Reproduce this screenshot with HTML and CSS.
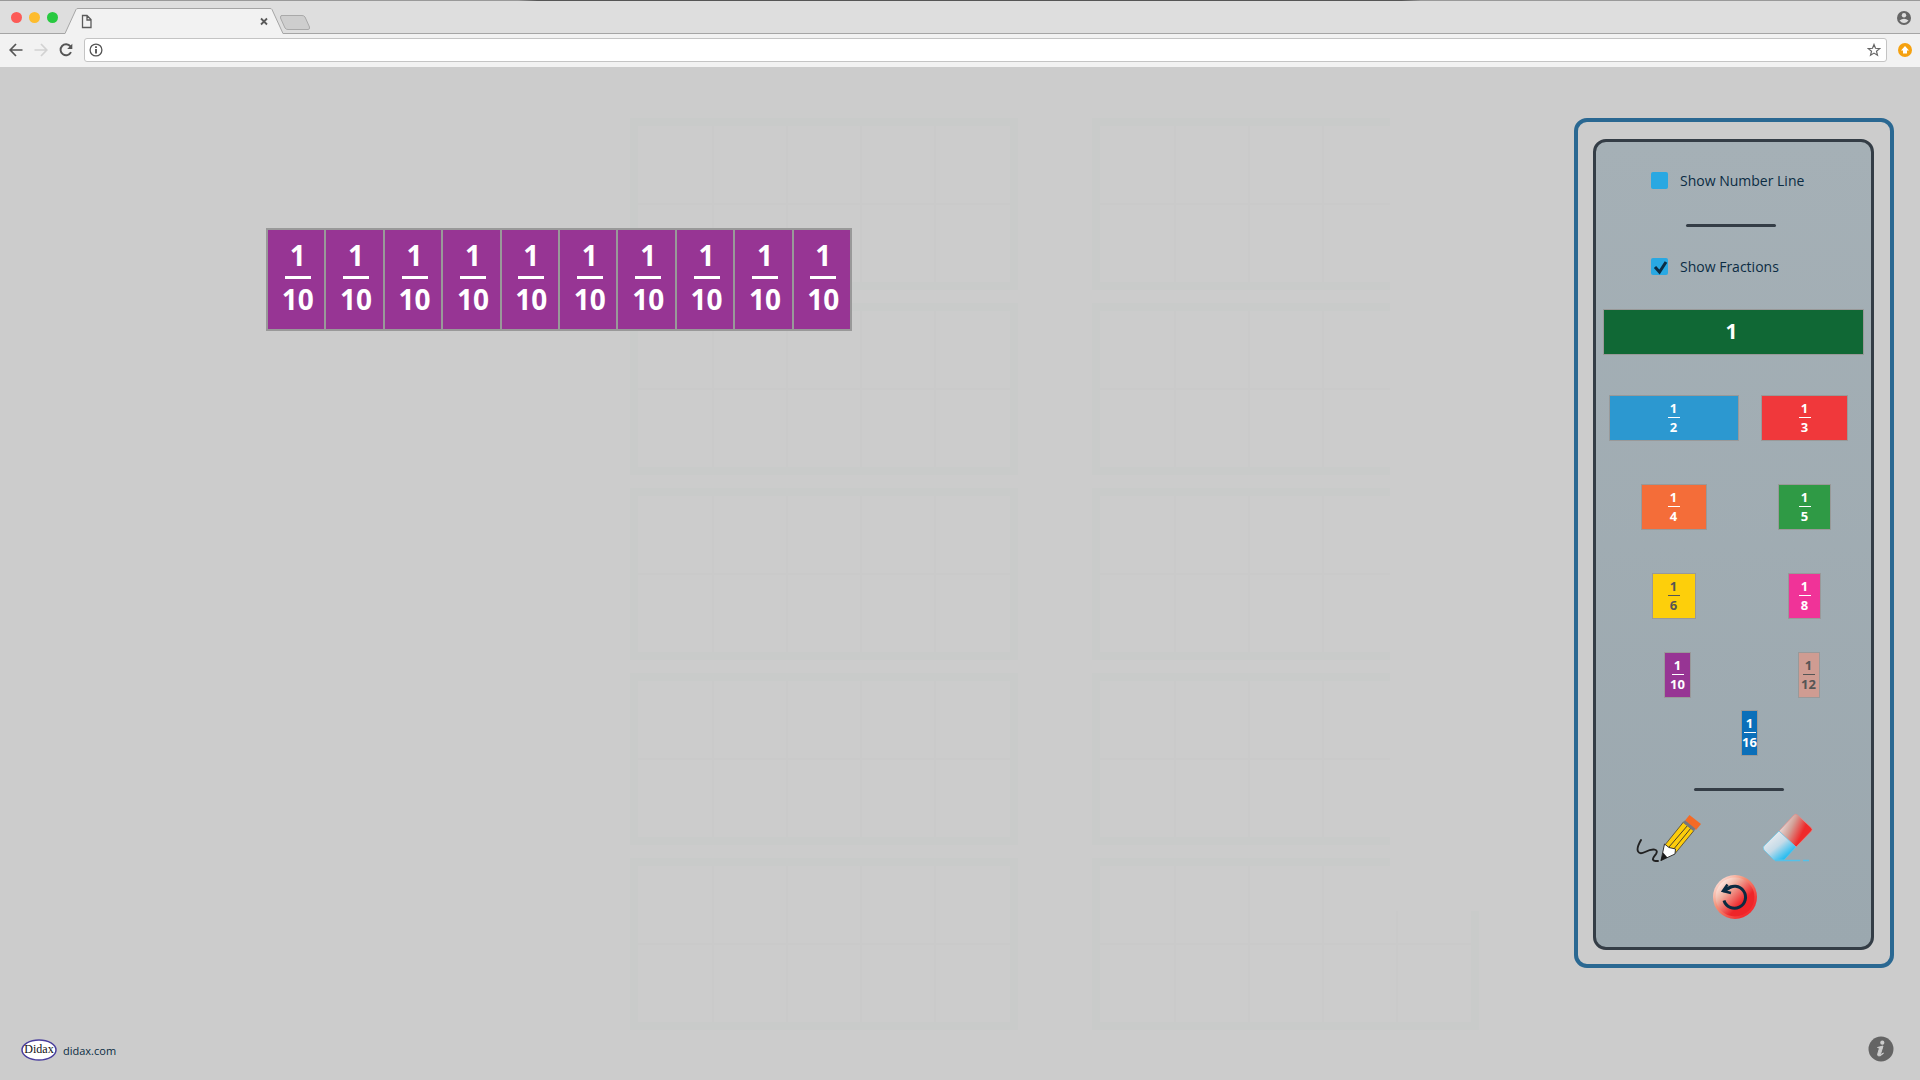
FILE: index.html
```html
<!DOCTYPE html>
<html lang="en">
<head>
<meta charset="utf-8">
<title>Fraction Tiles</title>
<link rel="stylesheet" href="styles.css">
</head>
<body>
<header class="browser">
  <div class="tabs">
    <span class="light red"></span><span class="light yellow"></span><span class="light green"></span>
    <svg class="tab-shape" width="246" height="34" viewBox="0 0 246 34">
      <path d="M0 33.5 L11 9.500Q11.500 8.500 13 8.500H205Q206.500 8.500 207 9.500L218 33.500V34H0Z" fill="#f2f2f2"/>
      <path d="M0 33.500 L11 9.500Q11.500 8.500 13 8.500H205Q206.500 8.500 207 9.500L218 33.500H246" fill="none" stroke="#a5a5a5"/>
      <path d="M216 15.500H237Q239 15.500 240 17L244.500 27Q245 29.500 243 29.500H223Q221 29.500 220 28L215.500 18Q215 15.500 217 15.500Z" fill="#cecece" stroke="#a9a9a9"/>
      <path d="M17.500 15.500H22L26 19.500V27.500H17.500ZM22 15.500V20H26" fill="none" stroke="#5b5b5b" stroke-width="1.300"/>
      <path d="M196 18.500L202 24.500M202 18.500L196 24.500" stroke="#5a5a5a" stroke-width="1.800"/>
    </svg>
    <svg class="user" width="14" height="14" viewBox="0 0 14 14"><circle cx="7" cy="7" r="7" fill="#666"/><circle cx="7" cy="4.300" r="2.200" fill="#dedede"/><path d="M2.500 9.500Q7 6 11.500 9.500Q7 14.500 2.500 9.500Z" fill="#dedede"/></svg>
  </div>
  <div class="toolbar">
    <button class="nav" aria-label="Back"><svg width="14" height="14" viewBox="0 0 14 14"><path d="M13.500 7H1.500M7 1L1.200 7L7 13" fill="none" stroke="#555" stroke-width="1.700"/></svg></button>
    <button class="nav" aria-label="Forward"><svg width="14" height="14" viewBox="0 0 14 14"><path d="M.5 7H12.500M7 1L12.800 7L7 13" fill="none" stroke="#d2d2d2" stroke-width="1.700"/></svg></button>
    <button class="nav" aria-label="Reload"><svg width="14" height="14" viewBox="0 0 14 14"><path d="M12 9.200A5.500 5.500 0 1 1 11.400 3.400" fill="none" stroke="#555" stroke-width="1.900"/><path d="M13.300 .8V6H8.200Z" fill="#555"/></svg></button>
    <div class="address">
      <svg width="14" height="14" viewBox="0 0 14 14"><circle cx="7" cy="7" r="5.900" fill="none" stroke="#555" stroke-width="1.300"/><path d="M7 6V10.500M7 3.300V4.900" stroke="#444" stroke-width="1.700"/></svg>
      <input class="url" type="text" aria-label="Address">
      <svg width="14" height="14" viewBox="0 0 14 14"><path d="M7 1.500L8.500 5.300L12.700 5.600L9.500 8.300L10.500 12.300L7 10.100L3.500 12.300L4.500 8.300L1.300 5.600L5.500 5.300Z" fill="none" stroke="#666" stroke-width="1.200"/></svg>
    </div>
    <svg width="14" height="14" viewBox="0 0 14 14"><circle cx="7" cy="7" r="7" fill="#f5a110"/><path d="M7 3L11 7.500H9V10.500H5V7.500H3Z" fill="#fff"/></svg>
  </div>
</header>
<main class="app">
  <svg class="ghost" width="850" height="912" viewBox="0 0 850 912" aria-hidden="true">
    <defs>
      <g id="frame-left" fill="none" stroke="#c9cbca"><rect x="4" y="4" width="380" height="164" stroke-width="8"/><path stroke="#cacaca" stroke-width="2" d="M83 8V164M157 8V164M231 8V164M305 8V164M8 86H380"/></g>
      <g id="frame-right" fill="none" stroke="#c9cbca"><path d="M760 4H466V168H760" stroke-width="8"/><path stroke="#cacaca" stroke-width="2" d="M545 8V164M619 8V164M693 8V164M470 86H760"/></g>
    </defs>
    <use href="#frame-left"/><use href="#frame-right"/>
    <use href="#frame-left" y="185"/><use href="#frame-right" y="185"/>
    <use href="#frame-left" y="370"/><use href="#frame-right" y="370"/>
    <use href="#frame-left" y="555"/><use href="#frame-right" y="555"/>
    <use href="#frame-left" y="740"/><use href="#frame-right" y="740"/>
    <path d="M760 908H845V793" fill="none" stroke="#c9cbca" stroke-width="8"/>
    <path d="M767 793V904M760 826H841" fill="none" stroke="#cacaca" stroke-width="2"/>
  </svg>
  <section class="canvas" aria-label="Workspace">
    <div class="strip">
      <div class="tile"><span>1</span><i></i><span>10</span></div>
      <div class="tile"><span>1</span><i></i><span>10</span></div>
      <div class="tile"><span>1</span><i></i><span>10</span></div>
      <div class="tile"><span>1</span><i></i><span>10</span></div>
      <div class="tile"><span>1</span><i></i><span>10</span></div>
      <div class="tile"><span>1</span><i></i><span>10</span></div>
      <div class="tile"><span>1</span><i></i><span>10</span></div>
      <div class="tile"><span>1</span><i></i><span>10</span></div>
      <div class="tile"><span>1</span><i></i><span>10</span></div>
      <div class="tile"><span>1</span><i></i><span>10</span></div>
    </div>
  </section>
  <aside class="frame">
    <div class="panel">
      <label class="option"><input type="checkbox"><span>Show Number Line</span></label>
      <hr class="rule rule-top">
      <label class="option"><input type="checkbox" checked><span>Show Fractions</span></label>
      <button class="piece whole">1</button>
      <div class="row">
        <button class="piece half"><span>1</span><i></i><span>2</span></button>
        <button class="piece third"><span>1</span><i></i><span>3</span></button>
      </div>
      <div class="row">
        <button class="piece fourth"><span>1</span><i></i><span>4</span></button>
        <button class="piece fifth"><span>1</span><i></i><span>5</span></button>
      </div>
      <div class="row">
        <button class="piece sixth"><span>1</span><i></i><span>6</span></button>
        <button class="piece eighth"><span>1</span><i></i><span>8</span></button>
      </div>
      <div class="row row-small">
        <button class="piece tenth"><span>1</span><i></i><span>10</span></button>
        <button class="piece twelfth"><span>1</span><i></i><span>12</span></button>
      </div>
      <button class="piece sixteenth"><span>1</span><i></i><span>16</span></button>
      <hr class="rule rule-bottom">
      <div class="tools">
        <button class="tool" aria-label="Draw">
          <svg width="66" height="50" viewBox="0 0 66 50">
            <path d="M5 27C-2 39 3 42 9 39C17 35 23 36 20 41C17 45 14 48 22 48" fill="none" stroke="#222" stroke-width="1.900" stroke-linecap="round"/>
            <path d="M47.500 9L58 17.500L39.500 40L28.500 32.500Z" fill="#fdcd0b" stroke="#4b3f2c" stroke-width=".8"/>
            <path d="M52 12L33 34M55 15L37 37" stroke="#4b3f2c"/>
            <path d="M28.500 31L33 34.500L39.500 36L39 41L25 47.500Z" fill="#fff" stroke="#333"/>
            <path d="M27 39.500L31.500 44.500L24.500 48Z" fill="#1b1b1b"/>
            <path d="M53.500 2L65 11L60 17L49 7.500Z" fill="#f46a25"/>
            <path d="M48 8.500L58.500 17" stroke="#77777b" stroke-width="3"/>
          </svg>
        </button>
        <button class="tool" aria-label="Erase">
          <svg width="52" height="50" viewBox="0 0 52 50">
            <defs>
              <linearGradient id="er" x1="0.1" y1="0.300" x2=".85" y2=".65"><stop offset="0" stop-color="#e8d8d6"/><stop offset=".35" stop-color="#d3a097"/><stop offset=".8" stop-color="#ef2a2a"/></linearGradient>
              <linearGradient id="eb" x1="0.200" y1=".2" x2=".8" y2=".85"><stop offset="0" stop-color="#e8eaee"/><stop offset=".45" stop-color="#c5dbe8"/><stop offset="1" stop-color="#18baf2"/></linearGradient>
            </defs>
            <path d="M17 18L32 2Q33.500 .5 35.500 2L49 14.500Q51 16.500 49.500 18L34 34Z" fill="url(#er)" stroke="#e58b88" stroke-width=".7"/>
            <path d="M17 18L34 34L22 47H12L2 37Q.5 34.500 2 33Z" fill="url(#eb)" stroke="#63c5e8" stroke-width=".7"/>
            <path d="M13 47.500H38M41 47.500H47" stroke="#55c1e8" stroke-width="1.700"/>
          </svg>
        </button>
      </div>
      <button class="tool reset" aria-label="Reset">
        <svg width="44" height="44" viewBox="0 0 44 44">
          <defs><linearGradient id="rs" x1=".1" y1=".1" x2=".85" y2=".85"><stop offset="0" stop-color="#fff0ea"/><stop offset=".3" stop-color="#efb3a2"/><stop offset=".75" stop-color="#ee2529"/></linearGradient>
          <linearGradient id="rr" x1="0" y1="0" x2="1" y2="1"><stop offset="0" stop-color="#fff"/><stop offset=".4" stop-color="#f48f75"/><stop offset=".8" stop-color="#f52d30"/></linearGradient></defs>
          <circle cx="22" cy="22" r="22" fill="url(#rr)"/><circle cx="22" cy="22" r="19.500" fill="url(#rs)"/>
          <path d="M11 25.500A11 11 0 1 0 14 14.200" fill="none" stroke="#0a2b41" stroke-width="3"/>
          <path d="M14.500 9.500L10 16L18 18M10 16.500L18 12" fill="none" stroke="#0a2b41" stroke-width="2.600"/>
        </svg>
      </button>
    </div>
  </aside>
</main>
<footer class="footer">
  <a class="brand" href="#">
    <svg width="36" height="22" viewBox="0 0 36 22">
      <defs><linearGradient id="rb"><stop offset="0" stop-color="#c3369c"/><stop offset=".3" stop-color="#296db9"/><stop offset=".6" stop-color="#2bb77d"/><stop offset="1" stop-color="#f5e12b"/></linearGradient></defs>
      <ellipse cx="18" cy="11" rx="17" ry="10" fill="#fff" stroke="#4a3f9d" stroke-width="1.500"/>
      <path d="M6 15.500H29" stroke="url(#rb)" stroke-width="1.500"/>
      <text class="logo-text" x="18" y="14" text-anchor="middle">Didax</text>
    </svg>
    <span>didax.com</span>
  </a>
  <button class="tool" aria-label="Information">
    <svg width="26" height="26" viewBox="0 0 26 26"><circle cx="13" cy="13" r="12.500" fill="#646464"/><circle cx="14.300" cy="6.700" r="2.100" fill="#ccc"/><path d="M9.500 11.500L15 10L12.500 18Q12.500 19 15.500 17Q13 20.500 10.500 20Q9 19.500 10 17L11.500 12.200Z" fill="#ccc" stroke="#ccc"/></svg>
  </button>
</footer>
</body>
</html>
```
FILE: styles.css
```css
* { box-sizing: border-box; }
body {
  margin: 0;
  min-height: 100vh;
  display: flex;
  flex-direction: column;
  background: #ccc;
  color: #0b2c43;
  font-family: "Open Sans", "Noto Sans", sans-serif;
}
button {
  margin: 0;
  padding: 0;
  border: 0;
  background: none;
  font: inherit;
  color: inherit;
}
svg { display: block; flex: none; }

.browser { background: #f2f2f2; }
.tabs {
  display: flex;
  align-items: center;
  height: 34px;
  padding: 1px 9px 0 11px;
  background: linear-gradient(90deg, #999 27%, #555 28%, #555 73%, #999 74%) top / 100% 1px no-repeat #dedede;
  box-shadow: inset 0 -1px #a5a5a5;
}
.light { width: 11px; height: 11px; border-radius: 50%; margin-right: 7px; }
.red { background: #fc5b57; }
.yellow { background: #fdbc2e; }
.green { background: #28c940; }
.tab-shape { margin-bottom: 1px; }
.user { margin-left: auto; }
.toolbar {
  display: flex;
  align-items: center;
  gap: 11px;
  height: 33px;
  padding: 0 8px 1px 9px;
}
.address {
  flex: 1;
  display: flex;
  align-items: center;
  height: 24px;
  padding: 0 5px 0 4px;
  background: #fff;
  border: 1px solid #c4c4c4;
  border-radius: 3px;
}
.url { flex: 1; border: 0; outline: 0; background: none; }

.app {
  position: relative;
  flex: 1;
  display: flex;
  align-items: flex-start;
  justify-content: space-between;
  padding: 51px 26px 0 266px;
}
/* faint ten-frame guides behind the workspace */
.ghost { position: absolute; left: 630px; top: 51px; z-index: -1; }
.canvas { padding-top: 110px; }
.strip {
  display: flex;
  gap: 2px;
  width: 586px;
  height: 103px;
  padding: 2px;
  background: #999;
}
.tile {
  flex: 1;
  display: flex;
  flex-direction: column;
  align-items: center;
  padding: 7px 0 0 3px;
  background: #973594;
  color: #fff;
  font-size: 28px;
  font-weight: 700;
  line-height: 36px;
}
.tile i { width: 26px; height: 3px; margin: 3px 0 2px; background: #fff; }

.frame {
  width: 320px;
  padding: 17px 16px 14px 15px;
  border: 4px solid #2a6892;
  border-radius: 13px;
}
.panel {
  display: flex;
  flex-direction: column;
  padding: 29px 1px 28px 7px;
  border: 3px solid #343d46;
  border-radius: 13px;
  background: linear-gradient(#a5b0b6, #9ba8af);
}
.option {
  display: flex;
  align-items: center;
  gap: 12px;
  height: 20px;
  margin-left: 48px;
  font-size: 14px;
  font-weight: 500;
  line-height: 20px;
}
.option input {
  appearance: none;
  width: 17px;
  height: 17px;
  margin: 0 0 2px;
  border-radius: 2px;
  background: #29a8e2;
}
.option input:checked {
  background: #29a8e2 url("data:image/svg+xml,%3Csvg xmlns='http://www.w3.org/2000/svg' viewBox='0 0 17 17'%3E%3Cpath d='M4 9L8.500 14L15 4' fill='none' stroke='%230b2c43' stroke-width='3'/%3E%3C/svg%3E");
}
.rule { width: 90px; height: 3px; border: 0; border-radius: 2px; background: #343d46; }
.rule-top { margin: 33px 0 30px 83px; }
.rule-bottom { margin: 32px 0 22px 91px; }
.piece {
  display: flex;
  flex-direction: column;
  align-items: center;
  justify-content: center;
  height: 46px;
  padding-bottom: 2px;
  border: 1px solid #999;
  color: #fff;
  font-size: 13px;
  font-weight: 700;
  line-height: 18px;
}
.piece i { width: 12px; height: 1px; background: currentColor; }
.whole { margin: 32px 6px 0 0; padding-right: 4px; background: #106835; font-size: 21px; }
.row {
  display: grid;
  grid-template-columns: 1fr 1fr;
  justify-items: center;
  margin: 40px 0 3px 5px;
}
.row-small { margin: 30px -4px 12px 9px; }
.half { width: 130px; background: #2c98d0; }
.third { width: 87px; background: #f0383b; }
.fourth { width: 66px; background: #f46d39; }
.fifth { width: 53px; background: #2f9a45; }
.sixth { width: 44px; background: #fdcf0b; color: #555; }
.eighth { width: 33px; background: #f03398; }
.tenth { width: 27px; background: #973594; }
.twelfth { width: 22px; background: #cf9c92; color: #555; }
.sixteenth { width: 17px; margin-left: 138px; background: #0b6fb9; }
.tools { display: flex; gap: 60px; margin-left: 33px; }
.reset { align-self: center; margin: 12px 4px 0 0; }

.footer {
  display: flex;
  align-items: center;
  justify-content: space-between;
  padding: 0 26px 18px 21px;
}
.brand {
  display: flex;
  align-items: center;
  gap: 6px;
  padding-top: 2px;
  color: inherit;
  font-size: 11px;
  font-weight: 500;
  text-decoration: none;
}
.logo-text { font: 12px "Liberation Serif", serif; fill: #111; }
```
